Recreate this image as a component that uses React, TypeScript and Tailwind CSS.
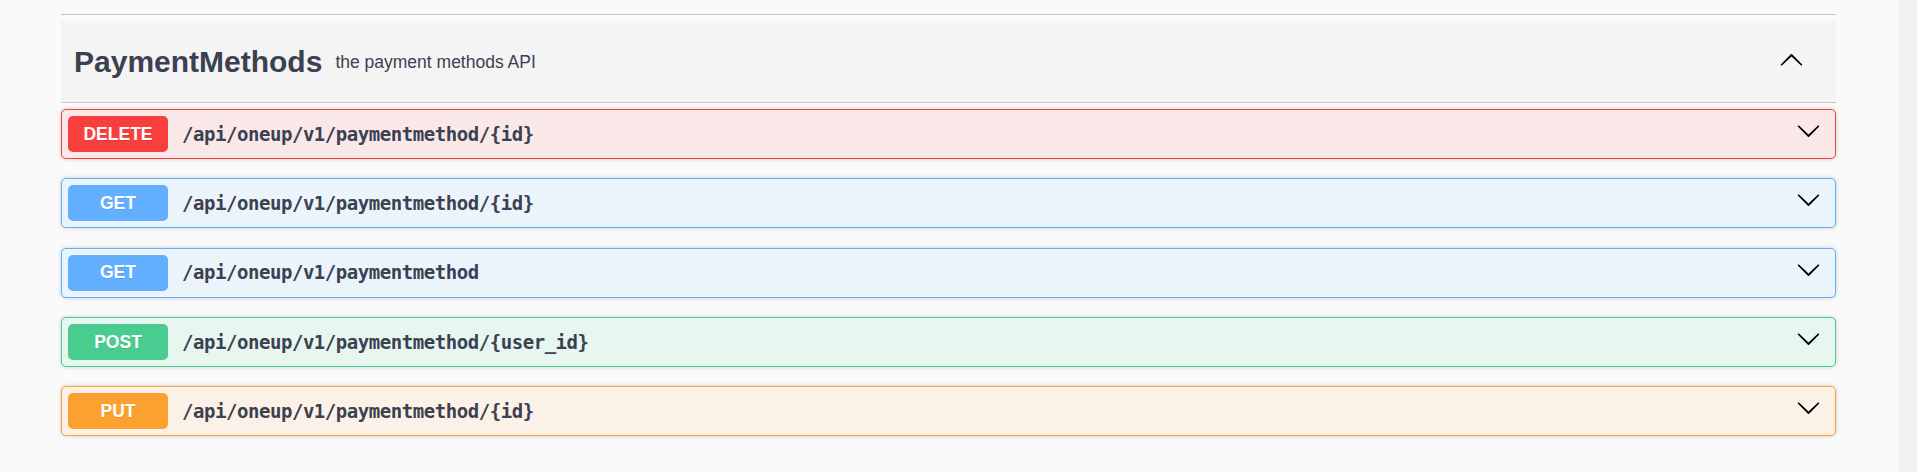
const ops = [
  { method: "DELETE", path: "/api/oneup/v1/paymentmethod/{id}", badge: "bg-[#f93e3e]", row: "bg-[#fae8e8] border-[#f93e3e]" },
  { method: "GET", path: "/api/oneup/v1/paymentmethod/{id}", badge: "bg-[#61affe]", row: "bg-[#ebf3fb] border-[#61affe]" },
  { method: "GET", path: "/api/oneup/v1/paymentmethod", badge: "bg-[#61affe]", row: "bg-[#ebf3fb] border-[#61affe]" },
  { method: "POST", path: "/api/oneup/v1/paymentmethod/{user_id}", badge: "bg-[#49cc90]", row: "bg-[#e8f6f0] border-[#49cc90]" },
  { method: "PUT", path: "/api/oneup/v1/paymentmethod/{id}", badge: "bg-[#fca130]", row: "bg-[#fbf1e6] border-[#fca130]" },
];

const Arrow = ({ up = false, className = "" }: { up?: boolean; className?: string }) => (
  <svg width="25" height="25" viewBox="0 0 20 20" className={className + (up ? " rotate-180" : "")} fill="#000">
    <path d="M17.418 6.109c.272-.268.709-.268.979 0s.271.701 0 .969l-7.908 7.83c-.27.268-.707.268-.979 0l-7.908-7.83c-.27-.268-.27-.701 0-.969.271-.268.709-.268.979 0L10 13.25l7.418-7.141z" />
  </svg>
);

export default function App() {
  return (
    <div className="flex w-[1917px] h-[472px] bg-[#fafafa] overflow-hidden">
      <div className="flex-1 pl-[61px] pr-[62px] pt-[14px]">
        <div className="border-t border-[#c4c5ca]" />
        <div className="mt-[6px] h-[82px] bg-[#f4f4f4] border-b border-[#c4c5ca] flex items-center pl-[13px] pr-[32px]">
          <h3 className="text-[30px] font-bold text-[#3b4151] font-['Liberation_Sans',Arial,sans-serif] leading-none mt-[1px]">
            PaymentMethods
          </h3>
          <small className="ml-[13px] text-[17.5px] text-[#3b4151] font-['Liberation_Sans',Arial,sans-serif] leading-none mt-[3px]">
            the payment methods API
          </small>
          <div className="flex-1" />
          <Arrow up className="mb-[3px]" />
        </div>

        <div className="mt-[6px] flex flex-col gap-[19.25px]">
          {ops.map((op, i) => (
            <div
              key={i}
              className={"h-[50px] border rounded-[5px] flex items-center px-[6px] pr-[14px] shadow-[0_0_4px_rgba(0,0,0,0.19)] " + op.row}
            >
              <span
                className={"w-[100px] h-[36px] rounded-[5px] flex items-center justify-center text-white font-bold text-[17.5px] font-['Liberation_Sans',Arial,sans-serif] [text-shadow:0_1px_0_rgba(0,0,0,0.1)] " + op.badge}
              >
                {op.method}
              </span>
              <span className="pl-[14px] text-[19px] tracking-[-0.45px] font-bold text-[#3b4151] font-['DejaVu_Sans_Mono',monospace]">
                {op.path}
              </span>
              <div className="flex-1" />
              <Arrow className="mb-[7px]" />
            </div>
          ))}
        </div>
      </div>
      <div className="w-[19px] bg-[#f1f1f1]" />
    </div>
  );
}
